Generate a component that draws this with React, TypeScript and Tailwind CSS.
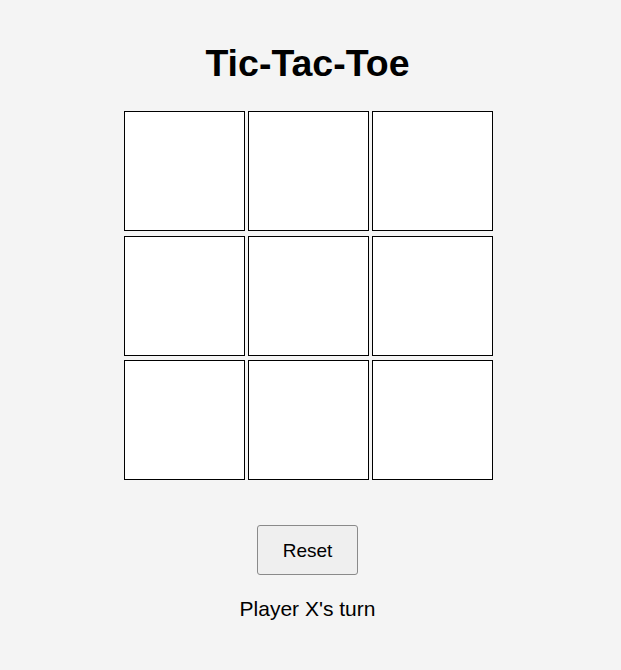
import React, { useState } from "react";

export default function App() {
  const [board, setBoard] = useState<(string | null)[]>(Array(9).fill(null));
  const [xNext, setXNext] = useState(true);

  const click = (i: number) => {
    if (board[i]) return;
    const b = board.slice();
    b[i] = xNext ? "X" : "O";
    setBoard(b);
    setXNext(!xNext);
  };

  return (
    <div
      className="min-h-[670px] w-full bg-[#f4f4f4] text-black"
      style={{ fontFamily: '"Liberation Sans", Arial, sans-serif' }}
    >
      <div className="flex w-[615px] flex-col items-center pt-[42px]">
        <h1 className="m-0 text-[37.5px] font-bold leading-[43px]">Tic-Tac-Toe</h1>
        <div className="mt-[26px] ml-[2px] grid grid-cols-[121px_121px_121px] grid-rows-[120px_120px_120px] gap-x-[3px] gap-y-[4.5px]">
          {board.map((v, i) => (
            <button
              key={i}
              onClick={() => click(i)}
              className="flex items-center justify-center border border-black bg-white text-[48px] font-bold"
            >
              {v}
            </button>
          ))}
        </div>
        <button
          onClick={() => {
            setBoard(Array(9).fill(null));
            setXNext(true);
          }}
          className="mt-[45px] h-[50px] w-[101px] rounded-[3px] border border-[#8a8a8a] bg-[#efefef] text-[19px] leading-none"
        >
          Reset
        </button>
        <p className="m-0 mt-[22px] text-[21px] leading-[24px]">
          Player {xNext ? "X" : "O"}'s turn
        </p>
      </div>
    </div>
  );
}
